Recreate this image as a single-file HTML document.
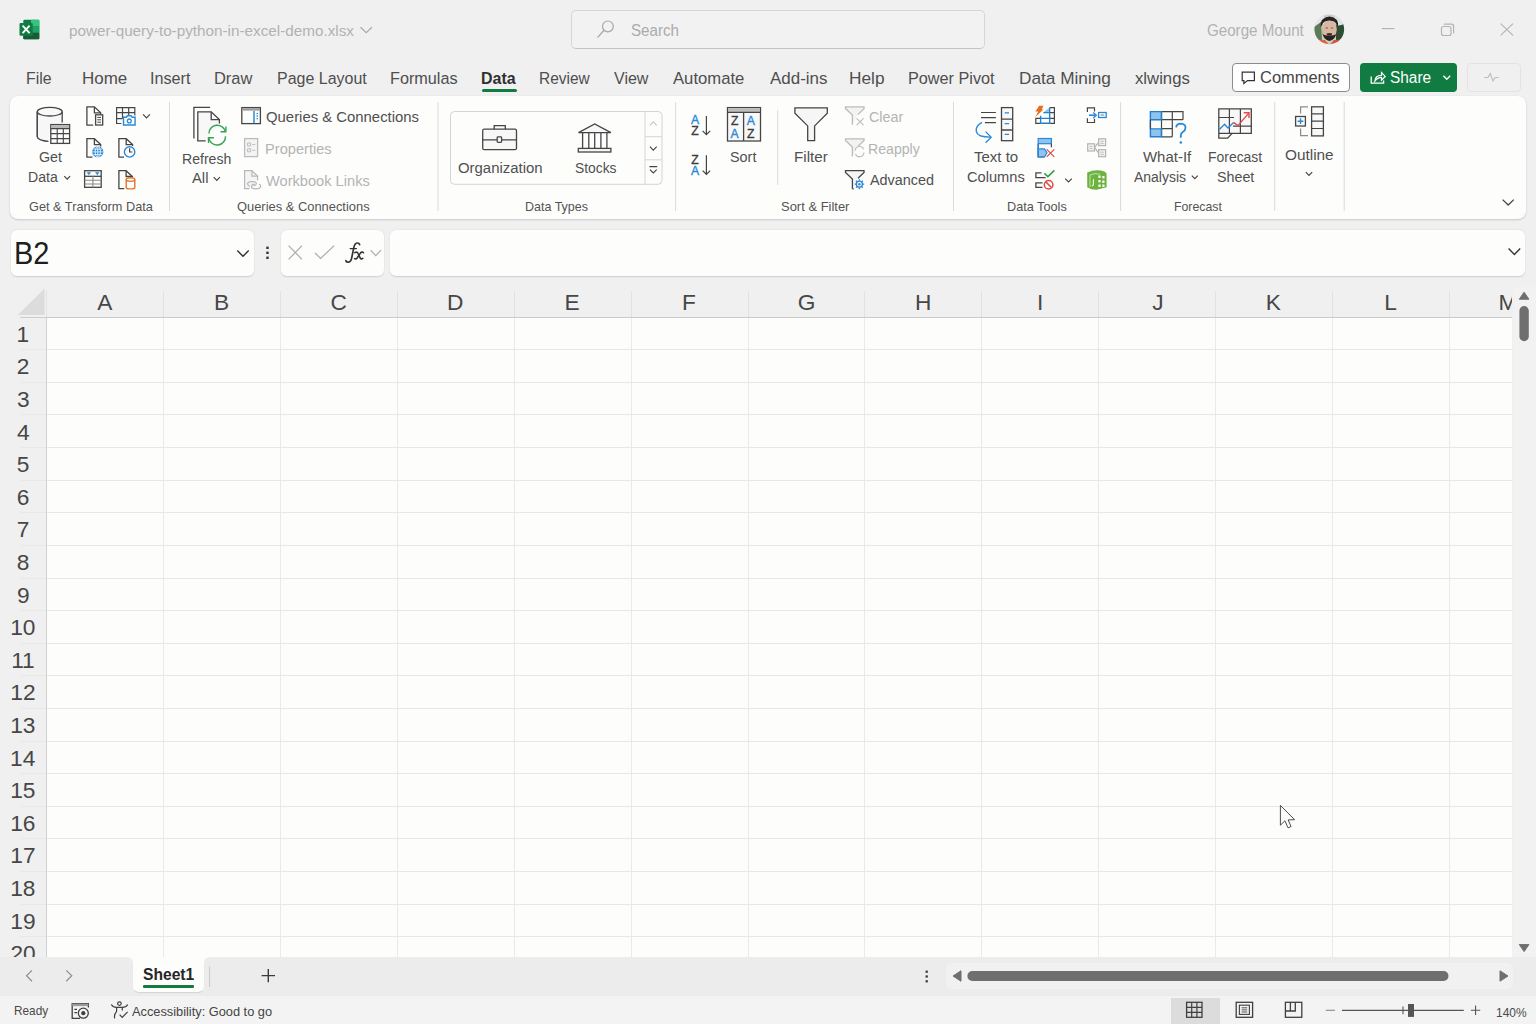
<!DOCTYPE html>
<html><head><meta charset="utf-8"><title>Excel</title>
<style>
html,body{margin:0;padding:0;}
body{width:1536px;height:1024px;overflow:hidden;position:relative;background:#f0f0f0;font-family:"Liberation Sans",sans-serif;}
.a{position:absolute;}
.t{position:absolute;white-space:nowrap;line-height:1;transform-origin:0 0;font-family:"Liberation Sans",sans-serif;}
.gl{position:absolute;background:#e7e7e7;}
.gv{position:absolute;background:#eaeaea;}
.hl{position:absolute;background:#e2e2e2;}
.rl{position:absolute;background:#e9e9e9;}
.panel{position:absolute;background:#fdfdfc;}
</style></head><body>
<!-- search box -->
<div class="a" style="left:571px;top:10px;width:412px;height:37px;border:1px solid #d6d6d6;border-bottom-color:#c4c4c4;border-radius:5px;background:#f2f2f2"></div>
<!-- comments / share buttons -->
<div class="a" style="left:1232px;top:63px;width:116px;height:27px;border:1px solid #8c8c8c;border-radius:4px;background:#fefefe"></div>
<div class="a" style="left:1360px;top:63px;width:97px;height:29px;border-radius:4px;background:#107c41"></div>
<div class="a" style="left:1467px;top:63px;width:52px;height:27px;border:1px solid #e3e3e3;border-radius:4px;background:#f0f0f0"></div>
<!-- Data tab underline -->
<div class="a" style="left:482px;top:89px;width:35px;height:3px;border-radius:1.5px;background:#107c41"></div>
<!-- ribbon -->
<div class="panel" style="left:10px;top:96px;width:1516px;height:123px;border-radius:8px;box-shadow:0 1px 2px rgba(0,0,0,0.16),0 0 1px rgba(0,0,0,0.08)"></div>
<!-- formula bar boxes -->
<div class="panel" style="left:11px;top:230px;width:243px;height:46px;border-radius:6px;box-shadow:0 0.5px 1.5px rgba(0,0,0,0.14)"></div>
<div class="panel" style="left:281px;top:230px;width:103px;height:46px;border-radius:6px;box-shadow:0 0.5px 1.5px rgba(0,0,0,0.14)"></div>
<div class="panel" style="left:390px;top:230px;width:1135px;height:46px;border-radius:6px;box-shadow:0 0.5px 1.5px rgba(0,0,0,0.14)"></div>
<!-- grid -->
<div class="panel" style="left:46px;top:317px;width:1466px;height:640px;"></div>
<div class="gv" style="left:163px;top:318px;width:1px;height:639px"></div>
<div class="hl" style="left:163px;top:291px;width:1px;height:26px"></div>
<div class="gv" style="left:280px;top:318px;width:1px;height:639px"></div>
<div class="hl" style="left:280px;top:291px;width:1px;height:26px"></div>
<div class="gv" style="left:397px;top:318px;width:1px;height:639px"></div>
<div class="hl" style="left:397px;top:291px;width:1px;height:26px"></div>
<div class="gv" style="left:514px;top:318px;width:1px;height:639px"></div>
<div class="hl" style="left:514px;top:291px;width:1px;height:26px"></div>
<div class="gv" style="left:631px;top:318px;width:1px;height:639px"></div>
<div class="hl" style="left:631px;top:291px;width:1px;height:26px"></div>
<div class="gv" style="left:748px;top:318px;width:1px;height:639px"></div>
<div class="hl" style="left:748px;top:291px;width:1px;height:26px"></div>
<div class="gv" style="left:864px;top:318px;width:1px;height:639px"></div>
<div class="hl" style="left:864px;top:291px;width:1px;height:26px"></div>
<div class="gv" style="left:981px;top:318px;width:1px;height:639px"></div>
<div class="hl" style="left:981px;top:291px;width:1px;height:26px"></div>
<div class="gv" style="left:1098px;top:318px;width:1px;height:639px"></div>
<div class="hl" style="left:1098px;top:291px;width:1px;height:26px"></div>
<div class="gv" style="left:1215px;top:318px;width:1px;height:639px"></div>
<div class="hl" style="left:1215px;top:291px;width:1px;height:26px"></div>
<div class="gv" style="left:1332px;top:318px;width:1px;height:639px"></div>
<div class="hl" style="left:1332px;top:291px;width:1px;height:26px"></div>
<div class="gv" style="left:1449px;top:318px;width:1px;height:639px"></div>
<div class="hl" style="left:1449px;top:291px;width:1px;height:26px"></div>
<div class="gl" style="left:47px;top:349px;width:1465px;height:1px"></div>
<div class="rl" style="left:20px;top:349px;width:26px;height:1px"></div>
<div class="gl" style="left:47px;top:382px;width:1465px;height:1px"></div>
<div class="rl" style="left:20px;top:382px;width:26px;height:1px"></div>
<div class="gl" style="left:47px;top:414px;width:1465px;height:1px"></div>
<div class="rl" style="left:20px;top:414px;width:26px;height:1px"></div>
<div class="gl" style="left:47px;top:447px;width:1465px;height:1px"></div>
<div class="rl" style="left:20px;top:447px;width:26px;height:1px"></div>
<div class="gl" style="left:47px;top:480px;width:1465px;height:1px"></div>
<div class="rl" style="left:20px;top:480px;width:26px;height:1px"></div>
<div class="gl" style="left:47px;top:512px;width:1465px;height:1px"></div>
<div class="rl" style="left:20px;top:512px;width:26px;height:1px"></div>
<div class="gl" style="left:47px;top:545px;width:1465px;height:1px"></div>
<div class="rl" style="left:20px;top:545px;width:26px;height:1px"></div>
<div class="gl" style="left:47px;top:578px;width:1465px;height:1px"></div>
<div class="rl" style="left:20px;top:578px;width:26px;height:1px"></div>
<div class="gl" style="left:47px;top:610px;width:1465px;height:1px"></div>
<div class="rl" style="left:20px;top:610px;width:26px;height:1px"></div>
<div class="gl" style="left:47px;top:643px;width:1465px;height:1px"></div>
<div class="rl" style="left:20px;top:643px;width:26px;height:1px"></div>
<div class="gl" style="left:47px;top:675px;width:1465px;height:1px"></div>
<div class="rl" style="left:20px;top:675px;width:26px;height:1px"></div>
<div class="gl" style="left:47px;top:708px;width:1465px;height:1px"></div>
<div class="rl" style="left:20px;top:708px;width:26px;height:1px"></div>
<div class="gl" style="left:47px;top:741px;width:1465px;height:1px"></div>
<div class="rl" style="left:20px;top:741px;width:26px;height:1px"></div>
<div class="gl" style="left:47px;top:773px;width:1465px;height:1px"></div>
<div class="rl" style="left:20px;top:773px;width:26px;height:1px"></div>
<div class="gl" style="left:47px;top:806px;width:1465px;height:1px"></div>
<div class="rl" style="left:20px;top:806px;width:26px;height:1px"></div>
<div class="gl" style="left:47px;top:838px;width:1465px;height:1px"></div>
<div class="rl" style="left:20px;top:838px;width:26px;height:1px"></div>
<div class="gl" style="left:47px;top:871px;width:1465px;height:1px"></div>
<div class="rl" style="left:20px;top:871px;width:26px;height:1px"></div>
<div class="gl" style="left:47px;top:904px;width:1465px;height:1px"></div>
<div class="rl" style="left:20px;top:904px;width:26px;height:1px"></div>
<div class="gl" style="left:47px;top:936px;width:1465px;height:1px"></div>
<div class="rl" style="left:20px;top:936px;width:26px;height:1px"></div>
<div class="a" style="left:46px;top:291px;width:1px;height:26px;background:#e2e2e2"></div>
<div class="a" style="left:46px;top:317px;width:1px;height:640px;background:#d0d0d0"></div>
<div class="a" style="left:20px;top:317px;width:1492px;height:1px;background:#cbcbcb"></div>
<!-- vertical scrollbar track -->
<div class="a" style="left:1513px;top:287px;width:23px;height:670px;background:#f2f2f2;border-radius:8px 0 0 0"></div>
<!-- tab bar -->
<div class="panel" style="left:120px;top:957px;width:100px;height:35px"></div>
<div class="a" style="left:0;top:957px;width:133px;height:39px;background:#ececec;border-radius:0 6px 0 0"></div>
<div class="a" style="left:204px;top:957px;width:1332px;height:39px;background:#ececec;border-radius:6px 0 0 0"></div>
<div class="a" style="left:946px;top:963px;width:567px;height:26px;background:#f1f1f1;border-radius:6px"></div>
<div class="a" style="left:120px;top:990px;width:100px;height:6px;background:#ececec"></div>
<div class="panel" style="left:133px;top:957px;width:71px;height:35px;border-radius:0 0 6px 6px;box-shadow:0 1px 1px rgba(0,0,0,0.10)"></div>
<div class="a" style="left:143px;top:985px;width:51px;height:3px;background:#107c41;border-radius:1px"></div>
<!-- status bar -->
<div class="a" style="left:0;top:996px;width:1536px;height:28px;background:#f3f3f3"></div>
<div class="a" style="left:1171px;top:998px;width:49px;height:26px;background:#dcdcdc"></div>
<div class="t" style="left:68.88px;top:23.54px;font-size:14.71px;color:#b2b2b2;transform:scaleX(1.0378);">power-query-to-python-in-excel-demo.xlsx</div>
<div class="t" style="left:631.09px;top:22.66px;font-size:16.00px;color:#ababab;transform:scaleX(0.9460);">Search</div>
<div class="t" style="left:1206.84px;top:23.10px;font-size:15.71px;color:#b2b2b2;transform:scaleX(0.9639);">George Mount</div>
<div class="t" style="left:25.78px;top:70.39px;font-size:17.14px;color:#4e4e4e;transform:scaleX(0.9227);">File</div>
<div class="t" style="left:81.64px;top:70.39px;font-size:17.14px;color:#4e4e4e;transform:scaleX(0.9900);">Home</div>
<div class="t" style="left:150.04px;top:70.39px;font-size:17.14px;color:#4e4e4e;transform:scaleX(0.9452);">Insert</div>
<div class="t" style="left:214.48px;top:70.39px;font-size:17.14px;color:#4e4e4e;transform:scaleX(0.9596);">Draw</div>
<div class="t" style="left:276.52px;top:70.39px;font-size:17.14px;color:#4e4e4e;transform:scaleX(0.9333);">Page Layout</div>
<div class="t" style="left:390.40px;top:70.39px;font-size:17.14px;color:#4e4e4e;transform:scaleX(0.9474);">Formulas</div>
<div class="t" style="left:538.76px;top:70.39px;font-size:17.14px;color:#4e4e4e;transform:scaleX(0.9023);">Review</div>
<div class="t" style="left:613.60px;top:70.39px;font-size:17.14px;color:#4e4e4e;transform:scaleX(0.9356);">View</div>
<div class="t" style="left:673.00px;top:70.39px;font-size:17.14px;color:#4e4e4e;transform:scaleX(0.9731);">Automate</div>
<div class="t" style="left:769.50px;top:70.39px;font-size:17.14px;color:#4e4e4e;transform:scaleX(0.9894);">Add-ins</div>
<div class="t" style="left:848.92px;top:70.39px;font-size:17.14px;color:#4e4e4e;transform:scaleX(1.0070);">Help</div>
<div class="t" style="left:907.70px;top:70.39px;font-size:17.14px;color:#4e4e4e;transform:scaleX(0.9475);">Power Pivot</div>
<div class="t" style="left:1018.62px;top:70.39px;font-size:17.14px;color:#4e4e4e;transform:scaleX(1.0052);">Data Mining</div>
<div class="t" style="left:1134.63px;top:70.39px;font-size:17.14px;color:#4e4e4e;transform:scaleX(0.9762);">xlwings</div>
<div class="t" style="left:481.34px;top:70.39px;font-size:17.14px;color:#303030;font-weight:bold;transform:scaleX(0.9322);">Data</div>
<div class="t" style="left:1260.28px;top:69.63px;font-size:16.86px;color:#444444;transform:scaleX(0.9757);">Comments</div>
<div class="t" style="left:1389.68px;top:69.63px;font-size:16.86px;color:#ffffff;transform:scaleX(0.9131);">Share</div>
<div class="t" style="left:38.59px;top:150.99px;font-size:13.71px;color:#505050;transform:scaleX(1.0397);">Get</div>
<div class="t" style="left:28.27px;top:170.89px;font-size:13.71px;color:#505050;transform:scaleX(1.0278);">Data</div>
<div class="t" style="left:181.67px;top:152.69px;font-size:13.71px;color:#505050;transform:scaleX(1.0270);">Refresh</div>
<div class="t" style="left:191.90px;top:171.89px;font-size:13.71px;color:#505050;transform:scaleX(1.0773);">All</div>
<div class="t" style="left:265.60px;top:110.79px;font-size:13.71px;color:#505050;transform:scaleX(1.0859);">Queries &amp; Connections</div>
<div class="t" style="left:265.03px;top:142.69px;font-size:13.71px;color:#b4b4b4;transform:scaleX(1.0673);">Properties</div>
<div class="t" style="left:266.20px;top:174.59px;font-size:13.71px;color:#b4b4b4;transform:scaleX(1.0671);">Workbook Links</div>
<div class="t" style="left:457.80px;top:162.29px;font-size:13.71px;color:#505050;transform:scaleX(1.0884);">Organization</div>
<div class="t" style="left:574.65px;top:162.29px;font-size:13.71px;color:#505050;transform:scaleX(1.0100);">Stocks</div>
<div class="t" style="left:730.12px;top:151.39px;font-size:13.71px;color:#505050;transform:scaleX(1.0514);">Sort</div>
<div class="t" style="left:794.19px;top:151.39px;font-size:13.71px;color:#505050;transform:scaleX(1.1062);">Filter</div>
<div class="t" style="left:868.88px;top:110.79px;font-size:13.71px;color:#b4b4b4;transform:scaleX(1.0468);">Clear</div>
<div class="t" style="left:868.47px;top:142.69px;font-size:13.71px;color:#b4b4b4;transform:scaleX(1.0301);">Reapply</div>
<div class="t" style="left:870.10px;top:174.19px;font-size:13.71px;color:#505050;transform:scaleX(1.0510);">Advanced</div>
<div class="t" style="left:973.70px;top:150.99px;font-size:13.71px;color:#505050;transform:scaleX(1.0951);">Text to</div>
<div class="t" style="left:966.67px;top:170.89px;font-size:13.71px;color:#505050;transform:scaleX(1.0676);">Columns</div>
<div class="t" style="left:1142.70px;top:151.09px;font-size:13.71px;color:#505050;transform:scaleX(1.0921);">What-If</div>
<div class="t" style="left:1134.00px;top:170.89px;font-size:13.71px;color:#505050;transform:scaleX(1.0186);">Analysis</div>
<div class="t" style="left:1207.63px;top:151.09px;font-size:13.71px;color:#505050;transform:scaleX(1.0166);">Forecast</div>
<div class="t" style="left:1216.63px;top:170.89px;font-size:13.71px;color:#505050;transform:scaleX(1.0419);">Sheet</div>
<div class="t" style="left:1284.69px;top:149.09px;font-size:13.71px;color:#505050;transform:scaleX(1.1201);">Outline</div>
<div class="t" style="left:29.36px;top:200.66px;font-size:12.57px;color:#545454;transform:scaleX(1.0139);">Get &amp; Transform Data</div>
<div class="t" style="left:237.28px;top:200.66px;font-size:12.57px;color:#545454;transform:scaleX(1.0265);">Queries &amp; Connections</div>
<div class="t" style="left:525.25px;top:200.66px;font-size:12.57px;color:#545454;transform:scaleX(0.9943);">Data Types</div>
<div class="t" style="left:780.88px;top:200.66px;font-size:12.57px;color:#545454;transform:scaleX(1.0320);">Sort &amp; Filter</div>
<div class="t" style="left:1006.98px;top:200.66px;font-size:12.57px;color:#545454;transform:scaleX(1.0101);">Data Tools</div>
<div class="t" style="left:1173.72px;top:200.66px;font-size:12.57px;color:#545454;transform:scaleX(0.9786);">Forecast</div>
<div class="t" style="left:13.78px;top:239.20px;font-size:30.71px;color:#1e1e1e;transform:scaleX(0.9438);">B2</div>
<div class="t" style="left:142.69px;top:965.57px;font-size:17.29px;color:#262626;font-weight:bold;transform:scaleX(0.9036);">Sheet1</div>
<div class="t" style="left:13.56px;top:1004.90px;font-size:12.29px;color:#4a4a4a;transform:scaleX(0.9615);">Ready</div>
<div class="t" style="left:132.30px;top:1004.60px;font-size:13.00px;color:#444444;transform:scaleX(0.9840);">Accessibility: Good to go</div>
<div class="t" style="left:1496.16px;top:1005.62px;font-size:13.14px;color:#4a4a4a;transform:scaleX(0.9130);">140%</div>
<div class="a" style="left:0;top:0;width:1512px;height:957px;overflow:hidden"><div class="t" style="left:16.61px;top:322.69px;font-size:22.71px;color:#474747;">1</div>
<div class="t" style="left:16.84px;top:355.30px;font-size:22.71px;color:#474747;">2</div>
<div class="t" style="left:16.95px;top:387.91px;font-size:22.71px;color:#474747;">3</div>
<div class="t" style="left:16.95px;top:420.52px;font-size:22.71px;color:#474747;">4</div>
<div class="t" style="left:16.84px;top:453.13px;font-size:22.71px;color:#474747;">5</div>
<div class="t" style="left:16.73px;top:485.74px;font-size:22.71px;color:#474747;">6</div>
<div class="t" style="left:16.84px;top:518.35px;font-size:22.71px;color:#474747;">7</div>
<div class="t" style="left:16.84px;top:550.96px;font-size:22.71px;color:#474747;">8</div>
<div class="t" style="left:16.95px;top:583.57px;font-size:22.71px;color:#474747;">9</div>
<div class="t" style="left:10.18px;top:616.18px;font-size:22.71px;color:#474747;">10</div>
<div class="t" style="left:11.14px;top:648.79px;font-size:22.71px;color:#474747;">11</div>
<div class="t" style="left:10.30px;top:681.40px;font-size:22.71px;color:#474747;">12</div>
<div class="t" style="left:10.18px;top:714.01px;font-size:22.71px;color:#474747;">13</div>
<div class="t" style="left:10.07px;top:746.62px;font-size:22.71px;color:#474747;">14</div>
<div class="t" style="left:10.18px;top:779.23px;font-size:22.71px;color:#474747;">15</div>
<div class="t" style="left:10.18px;top:811.84px;font-size:22.71px;color:#474747;">16</div>
<div class="t" style="left:10.30px;top:844.45px;font-size:22.71px;color:#474747;">17</div>
<div class="t" style="left:10.18px;top:877.06px;font-size:22.71px;color:#474747;">18</div>
<div class="t" style="left:10.30px;top:909.67px;font-size:22.71px;color:#474747;">19</div>
<div class="t" style="left:10.41px;top:942.28px;font-size:22.71px;color:#474747;">20</div><div class="t" style="left:97.33px;top:291.17px;font-size:22.71px;color:#474747;">A</div>
<div class="t" style="left:213.91px;top:291.17px;font-size:22.71px;color:#474747;">B</div>
<div class="t" style="left:330.38px;top:291.17px;font-size:22.71px;color:#474747;">C</div>
<div class="t" style="left:447.07px;top:291.17px;font-size:22.71px;color:#474747;">D</div>
<div class="t" style="left:564.56px;top:291.17px;font-size:22.71px;color:#474747;">E</div>
<div class="t" style="left:682.04px;top:291.17px;font-size:22.71px;color:#474747;">F</div>
<div class="t" style="left:797.83px;top:291.17px;font-size:22.71px;color:#474747;">G</div>
<div class="t" style="left:915.09px;top:291.17px;font-size:22.71px;color:#474747;">H</div>
<div class="t" style="left:1037.12px;top:291.17px;font-size:22.71px;color:#474747;">I</div>
<div class="t" style="left:1152.22px;top:291.17px;font-size:22.71px;color:#474747;">J</div>
<div class="t" style="left:1265.74px;top:291.17px;font-size:22.71px;color:#474747;">K</div>
<div class="t" style="left:1384.13px;top:291.17px;font-size:22.71px;color:#474747;">L</div>
<div class="t" style="left:1498.44px;top:291.17px;font-size:22.71px;color:#474747;">M</div></div>
<svg class="a" style="left:0;top:0" width="1536" height="1024" viewBox="0 0 1536 1024" fill="none" stroke-linejoin="miter">
<!-- Excel logo -->
<g>
 <rect x="23.3" y="19.8" width="16" height="19.5" rx="1.2" fill="#107c41"/>
 <rect x="31" y="19.8" width="8.3" height="6.5" fill="#33c481"/>
 <rect x="31" y="26.3" width="8.3" height="6.5" fill="#21a366"/>
 <rect x="23.3" y="32.8" width="16" height="6.5" rx="1" fill="#185c37"/>
 <rect x="19.5" y="22.9" width="13.2" height="12.9" rx="1.2" fill="#107c41"/>
 <path d="M22.6 25.6 L29.6 33.1 M29.6 25.6 L22.6 33.1" stroke="#fff" stroke-width="1.9"/>
</g>
<!-- title chevron -->
<path d="M360.5 27.2 L366.2 32.6 L371.9 27.2" stroke="#a8a8a8" stroke-width="1.2"/>
<!-- search icon -->
<circle cx="607.9" cy="26.4" r="5.4" stroke="#a8a8a8" stroke-width="1.2"/>
<path d="M604.0 30.3 L597.5 37.6" stroke="#a8a8a8" stroke-width="1.3"/>
<!-- avatar -->
<defs><clipPath id="av"><circle cx="1329.3" cy="29.4" r="14.8"/></clipPath></defs>
<g clip-path="url(#av)">
 <rect x="1314" y="14" width="31" height="31" fill="#c9cfc6"/>
 <path d="M1314 14 H1324 V24 L1314 28 Z" fill="#e4e8ea"/>
 <path d="M1314 27 L1321 22 L1322 40 L1314 40 Z" fill="#5b7a55"/>
 <path d="M1336 25 L1345 23 L1345 42 L1336 42 Z" fill="#2f4c34"/>
 <path d="M1334 14 H1345 V24 L1337 26 Z" fill="#dfe4e8"/>
 <path d="M1320.6 27 Q1320 17.5 1329.4 16.6 Q1338.8 17.5 1338.2 27 L1336.6 25 Q1336 21 1329.4 20.6 Q1322.8 21 1322.2 25 Z" fill="#2b2220"/>
 <ellipse cx="1329.4" cy="29.4" rx="7.4" ry="8.6" fill="#d9b7a0"/>
 <path d="M1322 30.5 Q1322.6 39.5 1329.4 41 Q1336.2 39.5 1336.8 30.5 L1336.4 34 Q1333 36 1329.4 35.4 Q1325.8 36 1322.4 34 Z" fill="#2a2220"/>
 <path d="M1326.6 33.6 Q1329.4 32.6 1332.2 33.6 L1331.8 35.2 Q1329.4 35.8 1327 35.2 Z" fill="#3a2a24"/>
 <path d="M1314 45 L1316 39.5 L1325 40 L1329.4 45 Z" fill="#e2643a"/>
 <path d="M1345 45 L1343 39.5 L1334 40 L1329.4 45 Z" fill="#d9542e"/>
 <path d="M1325.6 28 H1328 M1330.8 28 H1333.2" stroke="#7a5a50" stroke-width="1"/>
</g>
<!-- window controls -->
<path d="M1381.9 28.6 H1394.5" stroke="#b4b4b4" stroke-width="1.2"/>
<rect x="1441.5" y="26.5" width="9.5" height="9" rx="2" stroke="#b4b4b4" stroke-width="1.2"/>
<path d="M1443.8 24.2 H1451.5 Q1453.6 24.2 1453.6 26.3 V33.5" stroke="#b4b4b4" stroke-width="1.2"/>
<path d="M1500.6 23.6 L1513 35.4 M1513 23.6 L1500.6 35.4" stroke="#b4b4b4" stroke-width="1.2"/>
<!-- comments icon -->
<path d="M1242.2 72.2 H1254.4 V80.6 H1247.5 L1243.9 83.4 V80.6 H1242.2 Z" stroke="#333" stroke-width="1.2"/>
<!-- share icon -->
<path d="M1371.2 76.5 V83.2 H1383.6 V80.5" stroke="#fff" stroke-width="1.3"/>
<path d="M1374.8 81.2 Q1375.3 75.3 1381.5 75.3 V72.6 L1385.2 76.4 L1381.5 80.2 V77.4 Q1377.5 77.4 1374.8 81.2 Z" stroke="#fff" stroke-width="1.2"/>
<path d="M1443.4 75.8 L1446.8 79.2 L1450.2 75.8" stroke="#fff" stroke-width="1.4"/>
<!-- activity icon -->
<path d="M1484.3 77.5 H1488 L1490.3 73.6 L1493 81 L1495.2 77.5 H1498.7" stroke="#bdbdbd" stroke-width="1.1"/>

<!-- ===== RIBBON ===== -->
<g stroke="#454545" stroke-width="1.3">
 <!-- Get Data -->
 <path d="M37.3 111.7 V136.8 Q37.6 140.3 48.3 141.4" fill="#f7f7f7"/>
 <path d="M37.3 111.7 V136.8 Q37.6 140.3 48.3 141.4 L50.5 124.4 H62.2 V111.7 Z" fill="#f7f7f7" stroke="none"/>
 <path d="M37.3 111.7 V136.8 Q37.6 140.3 48.3 141.4"/>
 <ellipse cx="49.75" cy="111.7" rx="12.45" ry="4.3" fill="#f9f9f9"/>
 <path d="M62.2 111.7 V122.6"/>
 <rect x="50.8" y="124.6" width="18.8" height="18.8" fill="#fdfdfc"/>
 <rect x="51.3" y="125.2" width="17.8" height="3.2" fill="#b9b9b9" stroke="none"/>
 <path d="M50.8 128.6 H69.6 M50.8 133.6 H69.6 M50.8 138.6 H69.6 M57.2 128.6 V143.4 M63.3 128.6 V143.4" stroke-width="1.1"/>
 <path d="M64.3 176.2 L67.2 179.1 L70.1 176.2" stroke-width="1.2"/>
 <!-- From Text/CSV -->
 <path d="M93.2 125.2 H86.9 V106.9 H94.4 L100.7 112.8 V114.2"/>
 <path d="M94.4 106.9 V112.8 H100.7"/>
 <rect x="95.6" y="114.8" width="7.1" height="10.2"/>
 <path d="M97.3 117.4 H101 M97.3 119.8 H101 M97.3 122.2 H101" stroke-width="1"/>
 <!-- From Picture -->
 <path d="M121.3 123.5 H116.6 V107.7 H134.8 V115.4 M116.6 112.6 H134.8 M116.6 118.6 H122.4 M122.5 107.7 V118.5 M128.7 107.7 V115.5" stroke-width="1.2"/>
 <path d="M123.5 117.2 H126.3 L127.5 115.7 H131.1 L132.3 117.2 H135.1 V125.0 H123.5 Z" stroke="#2b88d8" stroke-width="1.4" fill="#fdfdfc"/>
 <circle cx="129.3" cy="120.9" r="1.9" stroke="#2b88d8" stroke-width="1.3"/>
 <path d="M143.1 114.4 L146.5 117.8 L149.9 114.4" stroke-width="1.2"/>
 <!-- From Web -->
 <path d="M92.5 157.2 H86.9 V138.7 H94.4 L100.7 144.6 V146.4"/>
 <path d="M94.4 138.7 V144.6 H100.7"/>
 <circle cx="97.8" cy="151.9" r="5.6" fill="#2b88d8" stroke="none"/>
 <path d="M92.4 151.9 H103.2 M97.8 146.4 V157.4 M93.4 149.2 H102.2 M93.4 154.6 H102.2" stroke="#fdfdfc" stroke-width="0.8"/>
 <ellipse cx="97.8" cy="151.9" rx="2.6" ry="5.5" stroke="#fdfdfc" stroke-width="0.8"/>
 <!-- Recent sources -->
 <path d="M124 157.2 H118.9 V138.7 H126.2 L132.6 144.6 V146"/>
 <path d="M126.2 138.7 V144.6 H132.6"/>
 <circle cx="129.6" cy="151.9" r="5.2" stroke="#2b88d8" stroke-width="1.4" fill="#fdfdfc"/>
 <path d="M129.6 148.3 V152.0 H132.4" stroke-width="1.2"/>
 <!-- From Table/Range -->
 <rect x="84.6" y="170.7" width="16.6" height="16.6"/>
 <path d="M84.6 176.3 H101.2" />
 <path d="M84.6 180.2 H101.2 M84.6 184 H101.2 M92.9 176.3 V187.3" stroke="#8a8a8a" stroke-width="1.1"/>
 <path d="M87.2 172.4 H90.6 L88.9 174.8 Z M95.6 172.4 H99 L97.3 174.8 Z" fill="#2b88d8" stroke="#2b88d8" stroke-width="0.6"/>
 <!-- Existing connections -->
 <path d="M124.2 188.6 H118.9 V170.7 H126.1 L132.3 176.5 V177.4"/>
 <path d="M126.1 170.7 V176.5 H132.3"/>
 <path d="M126.2 179.6 V187.4 Q126.2 188.9 130.5 188.9 Q134.8 188.9 134.8 187.4 V179.6" stroke="#e3732b" stroke-width="1.4" fill="#fdfdfc"/>
 <ellipse cx="130.5" cy="179.6" rx="4.3" ry="1.8" stroke="#e3732b" stroke-width="1.4" fill="#fdfdfc"/>
 <!-- separators -->
 <path d="M169.5 102 V211 M438 102 V211 M675.6 102 V211 M953.5 102 V211 M1120.6 102 V211 M1274.7 102 V211 M1344.2 102 V211" stroke="#dadada" stroke-width="1"/>
 <path d="M777.7 110 V185" stroke="#dadada" stroke-width="1"/>

 <!-- Refresh All -->
 <path d="M193.9 138.5 V107.4 H210.1"/>
 <path d="M205.7 140.8 H197.8 V111.8 H211.2 L219.4 119.6 V123.4" fill="#f8f8f8"/>
 <path d="M211.2 111.8 V119.6 H219.4"/>
 <path d="M208.9 133.6 A8.4 8.4 0 0 1 225.4 131.4" stroke="#35a450" stroke-width="1.4"/>
 <path d="M220.5 131.8 H225.9 V126.4" stroke="#35a450" stroke-width="1.4"/>
 <path d="M225.5 136.2 A8.4 8.4 0 0 1 208.9 138.4" stroke="#35a450" stroke-width="1.4"/>
 <path d="M213.9 137.7 H208.5 V143.1" stroke="#35a450" stroke-width="1.4"/>
 <path d="M213.7 177.2 L216.8 180.3 L219.9 177.2" stroke-width="1.2"/>
 <!-- Queries & Connections -->
 <rect x="241.8" y="107.6" width="18.6" height="16"/>
 <rect x="242.4" y="108.3" width="17.4" height="2.3" fill="#9a9a9a" stroke="none"/>
 <path d="M254 111 V123.2" stroke="#2b88d8" stroke-width="1.5"/>
 <path d="M256.5 113.7 H258 M256.5 116.2 H258 M256.5 118.6 H258" stroke="#2b88d8" stroke-width="1.3"/>
 <!-- Properties -->
 <rect x="244.6" y="138.6" width="13" height="18" stroke="#bcbcbc" fill="#f4f4f4"/>
 <path d="M247.6 143 H250.6 V146 H247.6 Z M247.6 148.8 H250.6 V151.8 H247.6 Z M252.4 144.5 H255.2 M252.4 150.3 H255.2" stroke="#bcbcbc" stroke-width="1"/>
 <!-- Workbook links -->
 <path d="M249.6 188.7 H244.6 V170.6 H251.9 L257.6 176.1 V180.2" stroke="#b8b8b8" fill="#f4f4f4" stroke-width="1.2"/>
 <path d="M251.9 170.6 V176.1 H257.6" stroke="#b8b8b8" stroke-width="1.2"/>
 <path d="M249.6 186.4 Q247.2 185 247.6 183.4 Q248.2 181.6 252 181.6 Q256.4 181.6 256.4 183.6 Q256.4 185.2 253.6 186" stroke="#b8b8b8" stroke-width="1.2" fill="none"/>
 <path d="M259.2 184 Q260.8 185.2 260.6 186.6 Q260.2 188.8 255.8 188.8 Q251.4 188.8 251.4 186.8 Q251.6 184.6 254.8 184.2" stroke="#b8b8b8" stroke-width="1.2" fill="none"/>

 <!-- Data types gallery -->
 <rect x="450.5" y="111.5" width="211.5" height="72.8" rx="4" stroke="#d4d4d4" stroke-width="1"/>
 <path d="M645 111.5 V184.3 M645 136.7 H662 M645 159.8 H662" stroke="#d4d4d4" stroke-width="1"/>
 <path d="M649.9 125.3 L653.3 121.9 L656.7 125.3" stroke="#c6c6c6" stroke-width="1.1"/>
 <path d="M649.9 146.7 L653.3 150.1 L656.7 146.7" stroke-width="1.1"/>
 <path d="M649.4 166.6 H657.2 M649.9 169.6 L653.3 173 L656.7 169.6" stroke-width="1.1"/>
 <!-- briefcase -->
 <rect x="482.7" y="129.2" width="33.8" height="20.5" rx="1.5" fill="#f7f7f7"/>
 <path d="M494.2 129.2 V125.6 H505.3 V129.2"/>
 <path d="M482.7 139.8 H497 M501.7 139.8 H516.5"/>
 <rect x="497.2" y="136.9" width="4.4" height="5.4" rx="0.8"/>
 <!-- bank -->
 <path d="M578.5 132.6 L594.7 123.9 L610.9 132.6 Z" fill="#f7f7f7"/>
 <path d="M582.6 132.6 V148.3 M588.8 132.6 V148.3 M594.7 132.6 V148.3 M600.9 132.6 V148.3 M606.9 132.6 V148.3"/>
 <rect x="578.3" y="148.4" width="32.6" height="3.6" fill="#f7f7f7"/>

 <!-- Sort asc/desc -->
 <path d="M706.4 115.9 V134.6 M702.6 130.8 L706.4 134.6 L710.2 130.8" stroke-width="1.2"/>
 <path d="M706.4 155.2 V174.4 M702.6 170.6 L706.4 174.4 L710.2 170.6" stroke-width="1.2"/>
 <!-- Sort big -->
 <rect x="727.5" y="107.6" width="33" height="33.4" fill="#f8f8f8"/>
 <rect x="728.1" y="108.2" width="31.8" height="3.8" fill="#bdbdbd" stroke="none"/>
 <path d="M727.5 112.4 H760.5 M743.6 112.4 V141"/>
 <!-- Filter -->
 <path d="M794.9 107.8 H827.3 V113.2 L814.6 125.9 V140.6 H807.7 V125.9 L794.9 113.2 Z" fill="#f6f6f6"/>
 <!-- Clear -->
 <path d="M852.4 124.8 V115 L845.5 108.6 V106.9 H864 V108.6 L857.8 114.6" stroke="#bcbcbc" fill="#f3f3f3"/>
 <path d="M856.6 118.4 L863.6 125.2 M863.6 118.4 L856.6 125.2" stroke="#bcbcbc" stroke-width="1.1"/>
 <!-- Reapply -->
 <path d="M852.4 156.6 V147 L845.5 140.5 V138.8 H864 V140.5 L858 146.2" stroke="#bcbcbc" fill="#f3f3f3"/>
 <path d="M855.3 150.4 A4.3 4.3 0 0 1 863.6 149.3 M863.9 152.6 A4.3 4.3 0 0 1 855.5 153.8" stroke="#bcbcbc" stroke-width="1.1"/>
 <!-- Advanced -->
 <path d="M852.4 188.8 H853.8 M852.4 188.8 V179 L845.5 172.4 V170.6 H864 V172.4 L858 178.2" fill="#f6f6f6"/>
 <g stroke="#2b88d8" stroke-width="1.3">
  <circle cx="859.4" cy="184.2" r="3"/>
  <path d="M859.4 179.2 V180.6 M859.4 187.8 V189.2 M854.6 184.2 H856 M862.8 184.2 H864.2 M856 180.8 L857 181.8 M861.8 186.6 L862.8 187.6 M862.8 180.8 L861.8 181.8 M857 186.6 L856 187.6"/>
 </g>
 <circle cx="859.4" cy="184.2" r="1.2" fill="#2b88d8" stroke="none"/>

 <!-- Text to columns -->
 <path d="M981 112.5 H995.9 M981 117.6 H995.9 M984.9 122.6 H995.9" stroke-width="1.2"/>
 <rect x="1001.5" y="107.6" width="11.2" height="33.1" fill="#f8f8f8"/>
 <path d="M1001.5 119.1 H1012.7 M1001.5 130.0 H1012.7"/>
 <path d="M1004.7 112.9 H1009 M1004.7 123.6 H1009 M1004.7 134.4 H1009" stroke="#2b88d8" stroke-width="1.2"/>
 <path d="M982 122.3 Q975.5 125.5 976.3 131.5 Q977.6 137.3 991 137.2" stroke="#2b88d8" stroke-width="1.3"/>
 <path d="M985.6 131.6 L991.2 137.2 L985.6 142.8" stroke="#2b88d8" stroke-width="1.3"/>
 <!-- Flash fill -->
 <path d="M1049.8 107.6 H1054.4 V123.4 H1035.8 V118.4 H1040.4 M1049.8 112.6 H1054.4 M1049.8 118.4 H1054.4" stroke-width="1.2"/>
 <path d="M1043.4 112.6 L1049.6 107.4 V112.6 Z" fill="#8ec4ee" stroke="none"/>
 <path d="M1040.6 115.8 V123.4 H1049.7 V107.4 M1043.4 112.6 H1049.7 M1040.6 118.4 H1049.7" stroke="#1f7fd0" stroke-width="1.3"/>
 <path d="M1039.2 105.8 H1043.4 L1041.8 109.6 H1043.4 L1035.4 116.9 L1038.2 111.6 H1035.4 Z" fill="#e46f1f" stroke="none"/>

 <!-- Remove duplicates -->
 <rect x="1038.2" y="138.5" width="13.2" height="5.2" fill="#8ec4ee" stroke="#2b88d8" stroke-width="1.2"/>
 <path d="M1038.2 143.7 V156.8 H1044.5 M1051.4 143.7 V147.3" stroke-width="1.2"/>
 <path d="M1038.2 148.9 H1044.5 L1047 152.8 L1044.5 156.8 H1038.2 Z" fill="#8ec4ee" stroke="#2b88d8" stroke-width="1.2"/>
 <path d="M1038.2 143.7 V156.8" stroke="#2b88d8" stroke-width="1.3"/>
 <path d="M1046.7 149.3 L1054.3 156.9 M1054.3 149.3 L1046.7 156.9" stroke="#e04a4a" stroke-width="1.2"/>
 <!-- Data validation -->
 <path d="M1041.5 172.8 H1035.9 V177.6 H1045.6" stroke-width="1.3"/>
 <path d="M1042.5 182.8 H1035.9 V187.4 H1042.5" stroke-width="1.3"/>
 <path d="M1044.4 173.4 L1047.9 176.6 L1054.4 170.4" stroke="#2ea043" stroke-width="1.5"/>
 <circle cx="1048.6" cy="184.7" r="4.3" stroke="#e04a4a" stroke-width="1.5" fill="#fdfdfc"/>
 <path d="M1045.8 181.9 L1051.4 187.5" stroke="#e04a4a" stroke-width="1.5"/>
 <path d="M1065.2 178.6 L1068.5 181.9 L1071.8 178.6" stroke-width="1.2"/>
 <!-- Consolidate -->
 <path d="M1087.4 112 V107.8 H1094.5 V111.6 M1087.4 118.3 V122.5 H1094.5 V118.8" stroke-width="1.2"/>
 <path d="M1089 115.2 H1095" stroke="#2b88d8" stroke-width="1.6"/>
 <path d="M1093.2 112.4 L1096.3 115.2 L1093.2 118" stroke="#2b88d8" stroke-width="1.4"/>
 <rect x="1098.6" y="112.5" width="7.6" height="5" stroke="#2b88d8" stroke-width="1.3"/>
 <path d="M1100.6 115 H1104.2" stroke="#888" stroke-width="1.1"/>
 <!-- Relationships -->
 <g stroke="#b4b4b4" stroke-width="1.2">
  <rect x="1087.7" y="143.8" width="6.8" height="7.2" fill="#f2f2f2"/>
  <rect x="1098.6" y="138.8" width="7" height="6.8" fill="#f2f2f2"/>
  <rect x="1098.6" y="149.7" width="7" height="7" fill="#f2f2f2"/>
  <path d="M1094.5 147.4 L1098.6 142.3 M1094.5 147.4 L1098.6 153.2"/>
  <path d="M1089.6 146.4 H1092.6 M1089.6 148.6 H1092.6 M1100.4 141.3 H1103.8 M1100.4 143.4 H1103.8 M1100.4 152.2 H1103.8 M1100.4 154.4 H1103.8" stroke-width="0.8"/>
 </g>
 <!-- Data model (green) -->
 <path d="M1087.2 172.5 Q1096 168.6 1104.5 171.6 L1106.6 173.5 V187.2 L1096.6 189.8 Q1091 189.8 1087.2 187.2 Z" fill="#6db33f" stroke="none"/>
 <path d="M1090 187 V175 Q1095 172.5 1100 174.2" stroke="#d9ecc9" stroke-width="0.8"/>
 <path d="M1093.4 179.2 V184.8 L1092 186.2" stroke="#fdfdfc" stroke-width="1.1"/>
 <g fill="#fdfdfc" stroke="none">
  <rect x="1098.4" y="175.5" width="2.2" height="2.4"/><rect x="1102.3" y="176" width="2.2" height="2.4"/>
  <rect x="1098.4" y="180" width="2.2" height="2.4"/><rect x="1102.3" y="180.5" width="2.2" height="2.4"/>
  <rect x="1098.4" y="184.5" width="2.2" height="2.4"/><rect x="1102.3" y="184.5" width="2.2" height="2.4"/>
 </g>

 <!-- What-if -->
 <rect x="1150.4" y="111.6" width="11.1" height="8.1" fill="#8ec4ee" stroke="none"/>
 <rect x="1150.4" y="129.2" width="11.1" height="7.6" fill="#8ec4ee" stroke="none"/>
 <path d="M1161.5 111.6 H1183 V119.7 M1161.5 119.7 H1183 M1161.5 128.7 H1172.3 M1161.5 136.8 H1172.3 M1161.5 111.6 V136.8 M1172.3 111.6 V136.8" stroke-width="1.2"/>
 <path d="M1150.4 111.6 H1161.5 V119.7 H1150.4 Z M1150.4 128.9 H1161.5 V136.8 H1150.4 Z M1150.4 111.6 V136.8" stroke="#1f7fd0" stroke-width="1.4"/>
 <path d="M1150.4 119.7 V128.9" stroke-width="1.2"/>
 <path d="M1176.2 127.4 Q1176.4 123.8 1180.8 123.7 Q1185.6 123.9 1185.5 127.8 Q1185.4 130.5 1182.8 132 Q1180.8 133.2 1180.8 135.7 V137.8" stroke="#2b88d8" stroke-width="1.8"/>
 <circle cx="1180.8" cy="142.4" r="1.25" fill="#2b88d8" stroke="none"/>
 <path d="M1191.8 175.6 L1194.8 178.6 L1197.8 175.6" stroke-width="1.2"/>
 <!-- Forecast sheet -->
 <path d="M1218.8 108.9 H1251.3 V133.3 H1232.1 L1227.7 138.2 H1218.8 Z" fill="#f8f8f8"/>
 <path d="M1218.8 133.3 H1232.1 M1229.4 108.9 V133.3 M1240.4 108.9 V133.3 M1218.8 117.5 H1234 M1233 126.1 H1251.3" stroke-width="1.2"/>
 <path d="M1219.3 129.4 L1224.6 124.3 L1228 128 L1233.6 122.4" stroke="#2b88d8" stroke-width="1.4"/>
 <path d="M1233.6 122.4 L1237.9 125.6 L1248.6 113.4" stroke="#e04a4a" stroke-width="1.4"/>
 <path d="M1243.8 112.8 H1249 V118" stroke="#e04a4a" stroke-width="1.4"/>
 <!-- Outline -->
 <path d="M1308 106.8 H1300.6 V113.6 M1300.6 128.6 V135.6 H1308" stroke="#8c8c8c" stroke-width="1.2"/>
 <rect x="1295.6" y="116.5" width="9.8" height="9.5" fill="#fdfdfc"/>
 <path d="M1297.6 121.2 H1303.4 M1300.5 118.3 V124.1" stroke="#2b88d8" stroke-width="1.4"/>
 <rect x="1311.6" y="106.8" width="11.8" height="29.1" fill="#f8f8f8"/>
 <path d="M1311.6 113.8 H1323.4 M1311.6 121.2 H1323.4 M1311.6 128.5 H1323.4" stroke-width="1.2"/>
 <path d="M1305.8 172.2 L1309 175.4 L1312.2 172.2" stroke-width="1.2"/>
 <!-- ribbon collapse -->
 <path d="M1502.6 199.6 L1508.2 205 L1513.8 199.6" stroke-width="1.3"/>
</g>
<!-- sort letters -->
<g font-family="Liberation Sans" font-size="12" stroke-width="0.35">
 <text x="690.9" y="124.4" fill="#2b88d8" font-size="12.2" stroke="#2b88d8">A</text>
 <text x="691.2" y="135.3" fill="#3c3c3c" font-size="12.2" stroke="#3c3c3c">Z</text>
 <text x="691.2" y="163.5" fill="#3c3c3c" font-size="12.2" stroke="#3c3c3c">Z</text>
 <text x="690.9" y="175" fill="#2b88d8" font-size="12.2" stroke="#2b88d8">A</text>
 <text x="730.9" y="124.6" fill="#3c3c3c" font-size="12.2" stroke="#3c3c3c">Z</text>
 <text x="730.6" y="137.7" fill="#2b88d8" font-size="12.2" stroke="#2b88d8">A</text>
 <text x="746.7" y="124.6" fill="#2b88d8" font-size="12.2" stroke="#2b88d8">A</text>
 <text x="747.0" y="137.7" fill="#3c3c3c" font-size="12.2" stroke="#3c3c3c">Z</text>
</g>

<!-- ===== formula bar ===== -->
<path d="M237.3 250.6 L243 256.3 L248.7 250.6" stroke="#333" stroke-width="1.4"/>
<g fill="#333"><rect x="266.3" y="246.6" width="2.4" height="2.4"/><rect x="266.3" y="251.6" width="2.4" height="2.4"/><rect x="266.3" y="256.6" width="2.4" height="2.4"/></g>
<path d="M288.6 245.6 L302 259.4 M302 245.6 L288.6 259.4" stroke="#ababab" stroke-width="1.2"/>
<path d="M315 253 L320.6 258.4 L334.2 245.6" stroke="#ababab" stroke-width="1.2"/>
<g stroke="#333" fill="none" stroke-linecap="round">
 <path d="M359.6 244.6 Q359 242.8 357.2 243 Q354.6 243.4 353.8 247.6 L351.6 258.4 Q350.8 262.4 347.8 262.2 Q346 262.1 345.9 260.6" stroke-width="1.7"/>
 <path d="M350.2 248.6 H356.4" stroke-width="1.4"/>
 <path d="M354.8 252.6 Q357.3 251.2 358.2 253.8 L360 257.6 Q361.1 259.8 362.8 258.4" stroke-width="1.6"/>
 <path d="M363.4 252.6 Q361.8 251.2 360.2 253.4 L357.8 257 Q356.4 259.6 354.6 258.6" stroke-width="1.6"/>
</g>
<path d="M370.6 250.2 L375.8 255.6 L381 250.2" stroke="#ababab" stroke-width="1.2"/>
<path d="M1508.6 248.6 L1514.4 254.4 L1520.2 248.6" stroke="#333" stroke-width="1.4"/>

<!-- corner triangle -->
<path d="M44.6 288.4 V314.9 H17.8 Z" fill="#dcdcdc"/>
<!-- vertical scrollbar -->
<path d="M1519.3 299.2 L1524.1 292.2 L1528.9 299.2 Z" fill="#6f6f6f" stroke="#6f6f6f" stroke-width="1" stroke-linejoin="round"/>
<rect x="1519.4" y="306" width="9.4" height="35.2" rx="4.7" fill="#6f6f6f"/>
<path d="M1519.3 944.6 L1524.1 951.6 L1528.9 944.6 Z" fill="#6f6f6f" stroke="#6f6f6f" stroke-width="1" stroke-linejoin="round"/>

<!-- ===== tab bar ===== -->
<path d="M32 970.4 L26.5 975.8 L32 981.2" stroke="#8f8f8f" stroke-width="1.2"/>
<path d="M66.2 970.4 L71.8 975.8 L66.2 981.2" stroke="#8f8f8f" stroke-width="1.2"/>
<path d="M209.6 966.5 V987" stroke="#c8c8c8" stroke-width="1"/>
<path d="M261.6 975.6 H275 M268.3 968.9 V982.3" stroke="#3a3a3a" stroke-width="1.4"/>
<g fill="#333"><rect x="925.6" y="970.6" width="2.2" height="2.2"/><rect x="925.6" y="975.4" width="2.2" height="2.2"/><rect x="925.6" y="980.2" width="2.2" height="2.2"/></g>
<path d="M961 970.8 L953 976 L961 981.2 Z" fill="#6f6f6f" stroke="#6f6f6f" stroke-width="1" stroke-linejoin="round"/>
<rect x="967.4" y="971.1" width="481.1" height="9.8" rx="4.9" fill="#6f6f6f"/>
<path d="M1500 970.8 L1508 976 L1500 981.2 Z" fill="#6f6f6f" stroke="#6f6f6f" stroke-width="1" stroke-linejoin="round"/>

<!-- ===== status bar ===== -->
<g stroke="#3f3f3f" stroke-width="1.3">
 <path d="M80 1018.3 H72.2 V1003.6 H88.4 V1007.4" />
 <rect x="72.2" y="1003.6" width="16.2" height="2.5" fill="#9a9a9a" stroke="none"/>
 <path d="M74.4 1009.4 H77 M74.4 1012.6 H77" stroke-width="1.1"/>
 <circle cx="83.3" cy="1013.2" r="5" fill="#f3f3f3"/>
 <circle cx="83.3" cy="1013.2" r="2.1" fill="#3f3f3f" stroke="none"/>
 <!-- accessibility -->
 <circle cx="119.4" cy="1003.6" r="1.8" stroke-width="1.2"/>
 <path d="M111.3 1004.5 Q113 1007.4 116.6 1007.4 H122.3 Q126 1007.4 127.7 1004.5" stroke-width="1.2"/>
 <path d="M116.6 1007.4 V1011.4 Q113.8 1014.6 114.7 1018.4 M122.3 1007.4 V1010.6" stroke-width="1.2"/>
 <path d="M119.6 1014.6 L122.2 1017.4 L127.6 1011.8" stroke-width="1.2"/>
 <!-- view icons -->
 <rect x="1186.6" y="1002.3" width="15.4" height="15" stroke-width="1.3"/>
 <path d="M1191.7 1002.3 V1017.3 M1196.9 1002.3 V1017.3 M1186.6 1007.3 H1202 M1186.6 1012.3 H1202" stroke-width="1.2"/>
 <rect x="1236.2" y="1002.3" width="16.4" height="15" stroke-width="1.3"/>
 <rect x="1239.4" y="1005.2" width="10" height="9.2" stroke-width="1.1"/>
 <path d="M1241.6 1007.8 H1247.2 M1241.6 1009.9 H1247.2 M1241.6 1012 H1247.2" stroke-width="0.9"/>
 <rect x="1285.4" y="1002.3" width="16.4" height="15" stroke-width="1.3"/>
 <path d="M1285.4 1011 H1295.3 V1002.3 M1290.4 1002.3 V1011" stroke-width="1.3"/>
 <!-- zoom -->
 <path d="M1325.8 1010.3 H1335" stroke="#8a8a8a" stroke-width="1.1"/>
 <path d="M1342 1010.4 H1463.8" stroke="#555" stroke-width="1.1"/>
 <path d="M1403 1006.6 V1014.2" stroke="#555" stroke-width="1.1"/>
 <rect x="1408" y="1004" width="6" height="12.9" fill="#555" stroke="none"/>
 <path d="M1470.9 1010.3 H1480.2 M1475.55 1005.6 V1015" stroke="#555" stroke-width="1.1"/>
</g>
<path d="M1280.4 805.4 V825.2 L1284.9 820.8 L1288 827.8 L1291 826.6 L1288.2 819.9 L1294.6 819.7 Z" fill="#fdfdfc" stroke="#3a3a3a" stroke-width="0.9" stroke-linejoin="round"/>
</svg>

</body></html>
